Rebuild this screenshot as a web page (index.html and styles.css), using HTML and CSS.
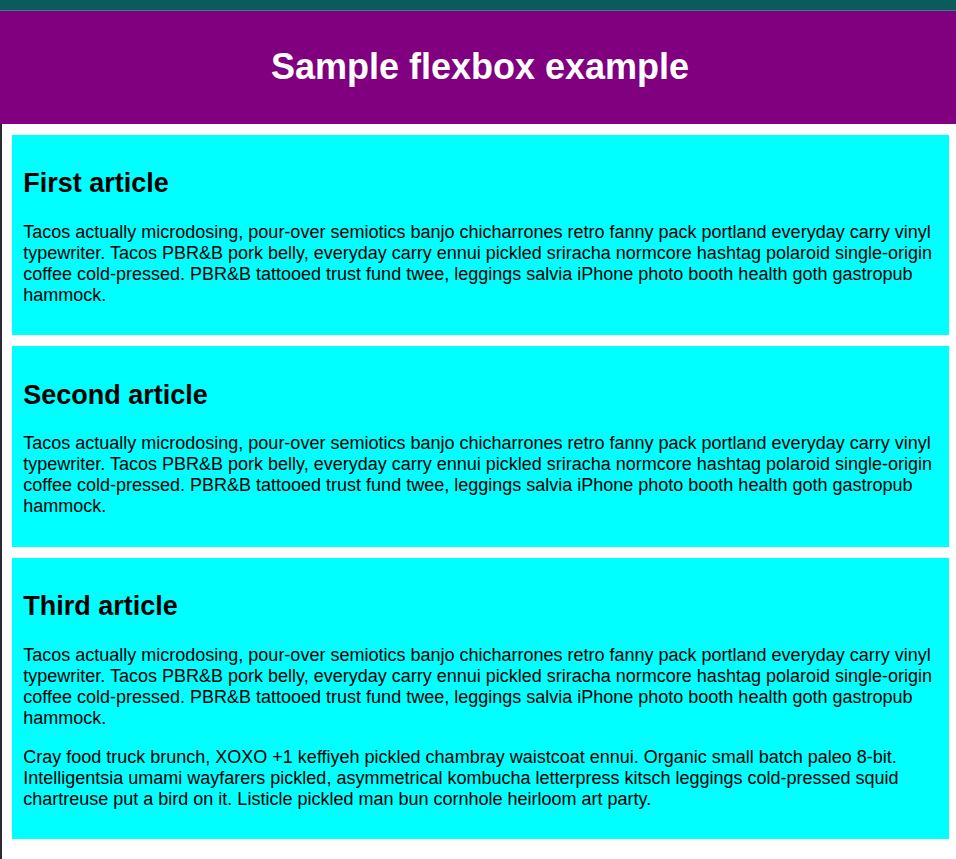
FILE: index.html
```html
<!DOCTYPE html>
<html lang="en">
<head>
<meta charset="utf-8">
<title>Flexbox 0 — starting code</title>
<link rel="stylesheet" href="styles.css">
</head>
<body>
<div class="page">
<div class="topbar"></div>
<header class="banner">
  <h1 class="banner-title">Sample flexbox example</h1>
</header>
<section class="articles">
  <article class="card">
    <h2 class="card-title">First article</h2>
    <p class="card-text">Tacos actually microdosing, pour-over semiotics banjo chicharrones retro fanny pack portland everyday carry vinyl typewriter. Tacos PBR&amp;B pork belly, everyday carry ennui pickled sriracha normcore hashtag polaroid single-origin coffee cold-pressed. PBR&amp;B tattooed trust fund twee, leggings salvia iPhone photo booth health goth gastropub hammock.</p>
  </article>
  <article class="card">
    <h2 class="card-title">Second article</h2>
    <p class="card-text">Tacos actually microdosing, pour-over semiotics banjo chicharrones retro fanny pack portland everyday carry vinyl typewriter. Tacos PBR&amp;B pork belly, everyday carry ennui pickled sriracha normcore hashtag polaroid single-origin coffee cold-pressed. PBR&amp;B tattooed trust fund twee, leggings salvia iPhone photo booth health goth gastropub hammock.</p>
  </article>
  <article class="card">
    <h2 class="card-title">Third article</h2>
    <p class="card-text">Tacos actually microdosing, pour-over semiotics banjo chicharrones retro fanny pack portland everyday carry vinyl typewriter. Tacos PBR&amp;B pork belly, everyday carry ennui pickled sriracha normcore hashtag polaroid single-origin coffee cold-pressed. PBR&amp;B tattooed trust fund twee, leggings salvia iPhone photo booth health goth gastropub hammock.</p>
    <p class="card-text">Cray food truck brunch, XOXO +1 keffiyeh pickled chambray waistcoat ennui. Organic small batch paleo 8-bit. Intelligentsia umami wayfarers pickled, asymmetrical kombucha letterpress kitsch leggings cold-pressed squid chartreuse put a bird on it. Listicle pickled man bun cornhole heirloom art party.</p>
  </article>
</section>
</div>
</body>
</html>
```
FILE: styles.css
```css
html {
  font-family: "Liberation Sans", Arial, sans-serif;
  font-size: 18px;
  overflow-x: hidden;
}

body {
  margin: 0;
  background: #ffffff;
  color: #000000;
  overflow-x: hidden;
}

.page {
  width: 960px;
}

.topbar {
  height: 10px;
  background: #0b5a5e;
  border-bottom: 1px solid #3f7c80;
}

.banner {
  background: #800080;
  height: 112.5px;
}

.banner-title {
  margin: 0;
  text-align: center;
  color: #ffffff;
  font-size: 36px;
  font-weight: bold;
  line-height: 112.5px;
}

.articles {
  border-left: 2px solid #2b2a33;
  padding: 0.25px 0;
  min-height: 736px;
}

.card {
  background: #00ffff;
  padding: 11.25px;
  margin: 11px 11.25px 11.25px 10px;
}

.card-title {
  font-size: 27px;
  font-weight: bold;
  margin: 22.4px 0;
}

.card-text {
  font-size: 18px;
  line-height: normal;
  margin: 18px 0;
}
```
